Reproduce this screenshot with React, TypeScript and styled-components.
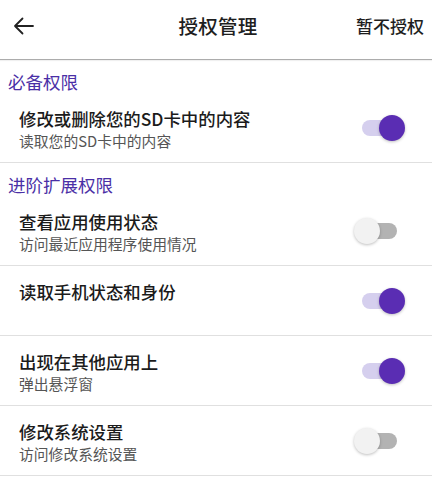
import React, { useState } from "react";
import styled, { createGlobalStyle } from "styled-components";

const Global = createGlobalStyle`
  html, body { margin: 0; padding: 0; background: #ffffff; }
  body { font-family: "Noto Sans CJK SC", "Noto Sans", sans-serif; color: #1b1b1b; }
`;

const Page = styled.div`
  width: 432px;
  background: #fff;
`;

const Header = styled.header`
  height: 60px;
  display: grid;
  grid-template-columns: 1fr auto 1fr;
  align-items: center;
  border-bottom: 1px solid #acacac;
  box-shadow: 0 1px 1px rgba(0, 0, 0, 0.06);
  padding: 0 8px 8px 12px;
  box-sizing: border-box;
`;

const BackButton = styled.button`
  justify-self: start;
  border: none;
  background: none;
  padding: 0;
  width: 24px;
  height: 24px;
  display: flex;
  align-items: center;
  justify-content: center;
  color: #222;
`;

const Title = styled.h1`
  margin: 0;
  font-size: 19.5px;
  font-weight: 500;
  color: #1e1e1e;
  letter-spacing: 0.2px;
`;

const Skip = styled.span`
  justify-self: end;
  font-size: 17px;
  font-weight: 500;
  color: #1e1e1e;
`;

const SectionTitle = styled.div`
  padding: 12px 8px 1px;
  line-height: 20px;
  font-size: 17.5px;
  color: #4a2fa6;
`;

const Row = styled.div`
  display: grid;
  grid-template-columns: 1fr auto;
  min-height: 70px;
  box-sizing: border-box;
  padding: 15px 27px 0 19px;
  border-bottom: 1px solid #e0e0e0;
`;

const TextCol = styled.div`
  display: flex;
  flex-direction: column;
  align-self: start;
`;

const RowTitle = styled.div`
  font-size: 17.4px;
  line-height: 22px;
  font-weight: 500;
  color: #1b1b1b;
`;

const RowSub = styled.div`
  font-size: 14.8px;
  line-height: 22px;
  color: #555;
`;

const ToggleWrap = styled.button`
  align-self: center;
  margin-top: -15px;
  position: relative;
  width: 51px;
  height: 26px;
  border: none;
  background: none;
  padding: 0;
  cursor: pointer;
`;

const Track = styled.span<{ $on: boolean }>`
  position: absolute;
  left: 8px;
  right: 8px;
  top: 5px;
  height: 16px;
  border-radius: 8px;
  background: ${(p) => (p.$on ? "#d5cfee" : "#b3b3b3")};
`;

const Thumb = styled.span<{ $on: boolean }>`
  position: absolute;
  top: 0;
  left: ${(p) => (p.$on ? "25px" : "0")};
  width: 26px;
  height: 26px;
  border-radius: 50%;
  background: ${(p) => (p.$on ? "#5a2db3" : "#f2f2f2")};
  box-shadow: 0 1px 3px rgba(0, 0, 0, 0.25);
`;

function Toggle({ on, onClick }: { on: boolean; onClick: () => void }) {
  return (
    <ToggleWrap onClick={onClick} aria-pressed={on}>
      <Track $on={on} />
      <Thumb $on={on} />
    </ToggleWrap>
  );
}

type Perm = { title: string; sub?: string; on: boolean };

const sections: { name: string; items: Perm[] }[] = [
  {
    name: "必备权限",
    items: [{ title: "修改或删除您的SD卡中的内容", sub: "读取您的SD卡中的内容", on: true }],
  },
  {
    name: "进阶扩展权限",
    items: [
      { title: "查看应用使用状态", sub: "访问最近应用程序使用情况", on: false },
      { title: "读取手机状态和身份", on: true },
      { title: "出现在其他应用上", sub: "弹出悬浮窗", on: true },
      { title: "修改系统设置", sub: "访问修改系统设置", on: false },
    ],
  },
];

export default function App() {
  const [state, setState] = useState(() =>
    sections.map((s) => s.items.map((i) => i.on))
  );
  const flip = (a: number, b: number) =>
    setState((prev) => prev.map((r, i) => (i === a ? r.map((v, j) => (j === b ? !v : v)) : r)));

  return (
    <Page>
      <Global />
      <Header>
        <BackButton aria-label="返回">
          <svg width="22" height="18" viewBox="0 0 22 18" fill="none">
            <path d="M20 9H2M9.5 1.5L2 9l7.5 7.5" stroke="#222" strokeWidth="1.8" strokeLinecap="round" strokeLinejoin="round" />
          </svg>
        </BackButton>
        <Title>授权管理</Title>
        <Skip>暂不授权</Skip>
      </Header>
      {sections.map((s, si) => (
        <section key={s.name}>
          <SectionTitle>{s.name}</SectionTitle>
          {s.items.map((it, ii) => (
            <Row key={it.title}>
              <TextCol>
                <RowTitle>{it.title}</RowTitle>
                {it.sub && <RowSub>{it.sub}</RowSub>}
              </TextCol>
              <Toggle on={state[si][ii]} onClick={() => flip(si, ii)} />
            </Row>
          ))}
        </section>
      ))}
    </Page>
  );
}
